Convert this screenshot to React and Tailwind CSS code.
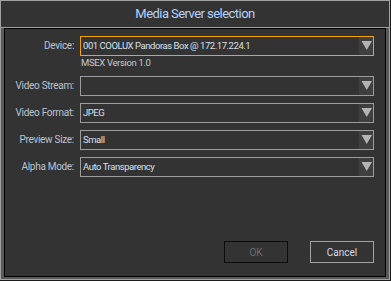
import * as React from "react";

const rows = [
    { label: "Device:", value: "001 COOLUX Pandoras Box @ 172.17.224.1", active: true },
    { label: "Video Stream:", value: "" },
    { label: "Video Format:", value: "JPEG" },
    { label: "Preview Size:", value: "Small" },
    { label: "Alpha Mode:", value: "Auto Transparency" },
];

function Arrow() {
    return (
        <div className="w-[14px] h-full bg-[#3f3f3f] flex items-center justify-center shrink-0">
            <svg width="14" height="18" viewBox="0 0 14 18">
                <polygon points="2.5,4 13,4 7.75,13" fill="#b4b4b4" />
            </svg>
        </div>
    );
}

function Select({ value, active }) {
    return (
        <div
            className={
                active
                    ? "h-[20px] flex items-stretch border border-[#f0a30a] bg-[#333333]"
                    : "h-[20px] flex items-stretch border border-[#9c9c9c] bg-[#333333]"
            }
        >
            <div className="flex-1 px-[2px] text-[9.5px] tracking-[-0.45px] leading-[18px] text-[#d8e0ec] whitespace-nowrap overflow-hidden">
                {value}
            </div>
            <Arrow />
        </div>
    );
}

export default function App() {
    return (
        <div
            className="w-[391px] h-[281px] border-r border-b border-[#1c1c1c] bg-[#333333]"
            style={{ fontFamily: 'Roboto, "Noto Sans", sans-serif' }}
        >
            <div className="h-full border-l border-t border-r border-b border-[#a2a2a2] flex flex-col">
                {/* title */}
                <div className="h-[26px] flex items-center justify-center text-[13px] tracking-[-0.55px] text-[#b2d2ff]">
                    Media Server selection
                </div>
                <div className="h-px bg-[#a0a0a0]" />

                <div className="flex-1 px-[3px] pb-[2px] bg-[#5a5a5a] flex flex-col">
                    <div className="flex-1 border border-black bg-[#333333] flex flex-col">
                        <div className="pt-[7px] grid grid-cols-[69px_294px] gap-x-[6px]">
                            {rows.map((row, index) => (
                                <React.Fragment key={index}>
                                    <div
                                        className={
                                            "h-[20px] text-right text-[10px] tracking-[-0.3px] leading-[20px] whitespace-nowrap text-[#bac4d2] " +
                                            (index > 1 ? "mt-[7px]" : "")
                                        }
                                    >
                                        {row.label}
                                    </div>
                                    <div className={index > 1 ? "mt-[7px]" : ""}>
                                        <Select value={row.value} active={row.active} />
                                    </div>
                                    {index === 0 && (
                                        <>
                                            <div />
                                            <div className="h-[20px] pl-px text-[9.5px] tracking-[-0.35px] leading-[14px] whitespace-nowrap text-[#c0ccdc]">
                                                MSEX Version 1.0
                                            </div>
                                        </>
                                    )}
                                </React.Fragment>
                            ))}
                        </div>

                        <div className="mt-auto flex justify-end gap-[22px] pr-[11px] pb-[13px]">
                            <button className="w-[64px] h-[22px] border border-[#0c0c0c] text-[10px] text-[#6e6e6e]">
                                OK
                            </button>
                            <button className="w-[64px] h-[22px] border border-[#a4a4a4] text-[10px] text-[#d4dcea]">
                                Cancel
                            </button>
                        </div>
                    </div>
                </div>
            </div>
        </div>
    );
}
